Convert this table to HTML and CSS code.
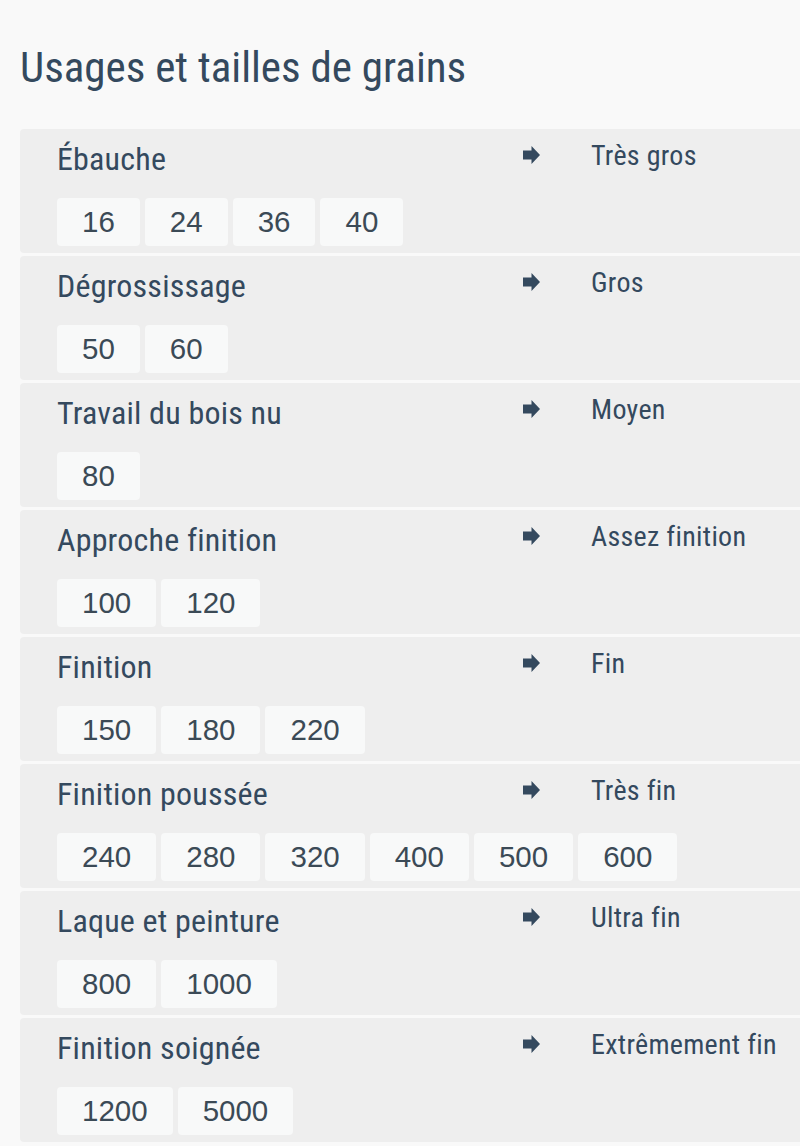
FILE: index.html
```html
<!DOCTYPE html>
<html lang="fr">
<head>
<meta charset="utf-8">
<title>Usages et tailles de grains</title>
<link rel="stylesheet" href="styles.css">
</head>
<body>
<h1 class="title">Usages et tailles de grains</h1>
<div class="list">
  <div class="row">
    <div class="usage">
      <div class="label">Ébauche</div>
      <div class="chips"><span class="chip">16</span><span class="chip">24</span><span class="chip">36</span><span class="chip">40</span></div>
    </div>
    <svg class="arrow" viewBox="0 0 17 18" width="17" height="18"><path d="M0 4.5h8.5V0L17 9l-8.5 9v-4.5H0z"/></svg>
    <div class="value">Très gros</div>
  </div>
  <div class="row">
    <div class="usage">
      <div class="label">Dégrossissage</div>
      <div class="chips"><span class="chip">50</span><span class="chip">60</span></div>
    </div>
    <svg class="arrow" viewBox="0 0 17 18" width="17" height="18"><path d="M0 4.5h8.5V0L17 9l-8.5 9v-4.5H0z"/></svg>
    <div class="value">Gros</div>
  </div>
  <div class="row">
    <div class="usage">
      <div class="label">Travail du bois nu</div>
      <div class="chips"><span class="chip">80</span></div>
    </div>
    <svg class="arrow" viewBox="0 0 17 18" width="17" height="18"><path d="M0 4.5h8.5V0L17 9l-8.5 9v-4.5H0z"/></svg>
    <div class="value">Moyen</div>
  </div>
  <div class="row">
    <div class="usage">
      <div class="label">Approche finition</div>
      <div class="chips"><span class="chip">100</span><span class="chip">120</span></div>
    </div>
    <svg class="arrow" viewBox="0 0 17 18" width="17" height="18"><path d="M0 4.5h8.5V0L17 9l-8.5 9v-4.5H0z"/></svg>
    <div class="value">Assez finition</div>
  </div>
  <div class="row">
    <div class="usage">
      <div class="label">Finition</div>
      <div class="chips"><span class="chip">150</span><span class="chip">180</span><span class="chip">220</span></div>
    </div>
    <svg class="arrow" viewBox="0 0 17 18" width="17" height="18"><path d="M0 4.5h8.5V0L17 9l-8.5 9v-4.5H0z"/></svg>
    <div class="value">Fin</div>
  </div>
  <div class="row">
    <div class="usage">
      <div class="label">Finition poussée</div>
      <div class="chips"><span class="chip">240</span><span class="chip">280</span><span class="chip">320</span><span class="chip">400</span><span class="chip">500</span><span class="chip">600</span></div>
    </div>
    <svg class="arrow" viewBox="0 0 17 18" width="17" height="18"><path d="M0 4.5h8.5V0L17 9l-8.5 9v-4.5H0z"/></svg>
    <div class="value">Très fin</div>
  </div>
  <div class="row">
    <div class="usage">
      <div class="label">Laque et peinture</div>
      <div class="chips"><span class="chip">800</span><span class="chip">1000</span></div>
    </div>
    <svg class="arrow" viewBox="0 0 17 18" width="17" height="18"><path d="M0 4.5h8.5V0L17 9l-8.5 9v-4.5H0z"/></svg>
    <div class="value">Ultra fin</div>
  </div>
  <div class="row">
    <div class="usage">
      <div class="label">Finition soignée</div>
      <div class="chips"><span class="chip">1200</span><span class="chip">5000</span></div>
    </div>
    <svg class="arrow" viewBox="0 0 17 18" width="17" height="18"><path d="M0 4.5h8.5V0L17 9l-8.5 9v-4.5H0z"/></svg>
    <div class="value">Extrêmement fin</div>
  </div>
</div>
</body>
</html>
```
FILE: styles.css
```css
html, body {
  margin: 0;
  padding: 0;
  background: #f9f9f9;
  color: #34495e;
}
body {
  font-family: Roboto, "Liberation Sans", sans-serif;
  font-stretch: 75%;
}
.title {
  margin: 0;
  padding: 41px 20px 0;
  font-size: 43px;
  line-height: 52px;
  font-weight: 400;
}
.list {
  margin: 36px 0 0 20px;
  display: flex;
  flex-direction: column;
  gap: 3px;
}
.row {
  display: flex;
  align-items: flex-start;
  background: #eeeeee;
  border-radius: 4px 0 0 4px;
  padding: 12px 0 7px 37px;
}
.usage {
  flex: 0 0 466px;
  min-width: 0;
}
.label {
  font-size: 32px;
  letter-spacing: 0.2px;
  line-height: 36px;
  white-space: nowrap;
}
.chips {
  display: flex;
  gap: 5px;
  margin-top: 21px;
}
.chip {
  background: #f8f9f9;
  border-radius: 4px;
  padding: 6px 25px;
  font-family: "Liberation Sans", Arial, sans-serif;
  font-stretch: normal;
  font-size: 29.5px;
  line-height: 36px;
  color: #3b4a56;
}
.arrow {
  flex: 0 0 17px;
  margin: 5px 51px 0 0;
  fill: #34495e;
}
.value {
  font-size: 28px;
  letter-spacing: 0.3px;
  line-height: 36px;
  margin-top: -3px;
  white-space: nowrap;
}
```
